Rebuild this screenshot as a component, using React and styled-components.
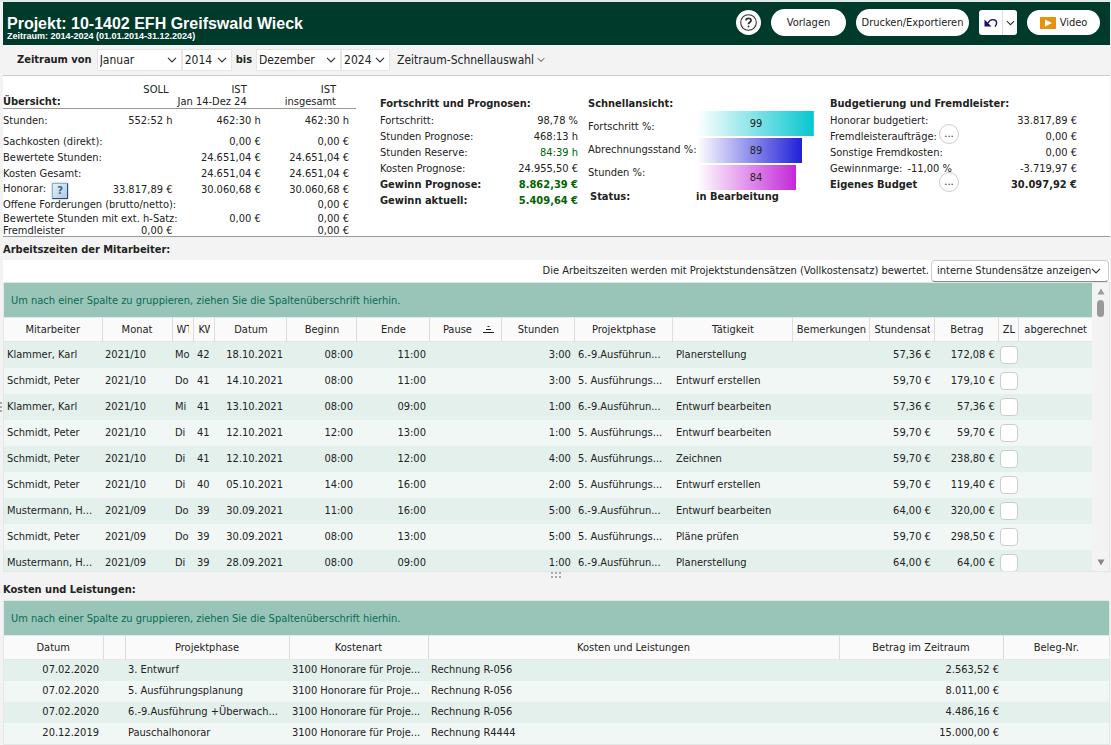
import React from 'react';
import styled, { createGlobalStyle } from 'styled-components';

function App() {
  return (
    <Page>
      <GlobalStyle />
      <Header />
      <PeriodBar />
      <Summary />
      <WorkTimes />
      <Splitter><Grip /></Splitter>
      <Costs />
    </Page>
  );
}

function Header() {
  return (
    <HeaderBar>
      <Titles>
        <Title>Projekt: 10-1402 EFH Greifswald Wieck</Title>
        <Subtitle>Zeitraum: 2014-2024 (01.01.2014-31.12.2024)</Subtitle>
      </Titles>
      <RoundButton aria-label="Hilfe">
        <svg width="19" height="19" viewBox="0 0 19 19" fill="none" stroke="#333">
          <circle cx="9.5" cy="9.5" r="7.8" strokeWidth="1.1" />
          <path d="M7 7.6 C7 4.6 12 4.6 12 7.4 C12 9.2 9.5 9.2 9.5 11.2" strokeWidth="1.8" />
          <circle cx="9.5" cy="13.5" r="0.6" fill="#333" strokeWidth="0.8" />
        </svg>
      </RoundButton>
      <PillButton $width={75}>Vorlagen</PillButton>
      <PillButton $width={113}>Drucken/Exportieren</PillButton>
      <SplitButton>
        <SplitPart $width={23} aria-label="Rückgängig">
          <svg width="14" height="10" viewBox="0 0 14 10" fill="none">
            <path d="M0.5 1.5 V8.5 H7.5 Z" fill="#14145c" />
            <path d="M4 5 C5.5 2 8.5 1.2 10.8 2 C13.2 3 13.2 6 11 8.6" stroke="#14145c" strokeWidth="1.4" />
          </svg>
        </SplitPart>
        <SplitPart $width={15} aria-label="Weitere Optionen"><Chevron size={9} /></SplitPart>
      </SplitButton>
      <PillButton $width={73} $low>
        <svg width="16" height="12" viewBox="0 0 16 12">
          <rect width="16" height="12" fill="#e8920f" />
          <path d="M5 2.5 L12 6 L5 9.5 Z" fill="#fff" />
        </svg>
        Video
      </PillButton>
    </HeaderBar>
  );
}

function Chevron({ size = 10 }) {
  return (
    <svg width={size} height="6" viewBox="0 0 10 6" fill="none" stroke="#333" strokeWidth="1.2">
      <path d="M1 0.8 L5 4.8 L9 0.8" />
    </svg>
  );
}

function SelectBox({ label, value, width, framed }) {
  return (
    <SelectFrame $width={width} $framed={framed}>
      <Select aria-label={label} defaultValue={value}>
        <option>{value}</option>
      </Select>
      <Chevron />
    </SelectFrame>
  );
}

function PeriodBar() {
  return (
    <Period>
      <PeriodLabel>Zeitraum von</PeriodLabel>
      <SelectBox label="Monat von" value="Januar" width={85} />
      <SelectBox label="Jahr von" value="2014" width={50} />
      <PeriodLabel>bis</PeriodLabel>
      <SelectBox label="Monat bis" value="Dezember" width={85} />
      <SelectBox label="Jahr bis" value="2024" width={49} />
      <QuickSelect>Zeitraum-Schnellauswahl <Chevron size={8} /></QuickSelect>
    </Period>
  );
}

const overview = [
  { label: 'Stunden:', values: ['552:52 h', '462:30 h', '462:30 h'], height: 25 },
  { label: 'Sachkosten (direkt):', values: ['', '0,00 €', '0,00 €'] },
  { label: 'Bewertete Stunden:', values: ['', '24.651,04 €', '24.651,04 €'] },
  { label: 'Kosten Gesamt:', values: ['', '24.651,04 €', '24.651,04 €'] },
  { label: 'Honorar:', help: true, values: ['33.817,89 €', '30.060,68 €', '30.060,68 €'] },
  { label: 'Offene Forderungen (brutto/netto):', values: ['', '', '0,00 €'], height: 15 },
  { label: 'Bewertete Stunden mit ext. h-Satz:', values: ['', '0,00 €', '0,00 €'], height: 13 },
  { label: 'Fremdleister', values: ['0,00 €', '', '0,00 €'], height: 11 },
];

const progress = [
  { label: 'Fortschritt:', value: '98,78 %' },
  { label: 'Stunden Prognose:', value: '468:13 h' },
  { label: 'Stunden Reserve:', value: '84:39 h', green: true },
  { label: 'Kosten Prognose:', value: '24.955,50 €' },
  { label: 'Gewinn Prognose:', value: '8.862,39 €', green: true, bold: true },
  { label: 'Gewinn aktuell:', value: '5.409,64 €', green: true, bold: true },
];

const bars = [
  { label: 'Fortschritt %:', value: 99, color: '#06c6d0' },
  { label: 'Abrechnungsstand %:', value: 89, color: '#2020d8' },
  { label: 'Stunden %:', value: 84, color: '#c428d8' },
];

const budget = [
  { label: 'Honorar budgetiert:', value: '33.817,89 €' },
  { label: 'Fremdleisteraufträge:', value: '0,00 €', more: true },
  { label: 'Sonstige Fremdkosten:', value: '0,00 €' },
  { label: 'Gewinnmarge:', extra: '-11,00 %', value: '-3.719,97 €' },
  { label: 'Eigenes Budget', value: '30.097,92 €', more: true, bold: true },
];

function Summary() {
  return (
    <SummaryGrid>
      <Overview>
        <OverviewTable>
          <colgroup>
            <col style={{ width: '23%' }} />
            <col style={{ width: '25%' }} />
            <col style={{ width: '25%' }} />
            <col />
          </colgroup>
          <thead>
            <tr><td /><th>SOLL</th><th>IST</th><th>IST</th></tr>
            <tr><th>Übersicht:</th><td /><th>Jan 14-Dez 24</th><th>insgesamt</th></tr>
          </thead>
          <tbody>
            {overview.map((row) => (
              <OverviewRow key={row.label} $height={row.height}>
                <th>
                  {row.label}
                  {row.help && <HelpButton aria-label="Hilfe zum Honorar">?</HelpButton>}
                </th>
                {row.values.map((value, i) => <td key={i}>{value}</td>)}
              </OverviewRow>
            ))}
          </tbody>
        </OverviewTable>
      </Overview>
      <Panel $right={10}>
        <PanelTitle>Fortschritt und Prognosen:</PanelTitle>
        {progress.map((row) => (
          <Line key={row.label} $bold={row.bold}>
            <span>{row.label}</span>
            <Value $green={row.green}>{row.value}</Value>
          </Line>
        ))}
      </Panel>
      <Panel $right={15}>
        <PanelTitle>Schnellansicht:</PanelTitle>
        <Chart>
          <BarLabels>
            {bars.map((bar) => <span key={bar.label}>{bar.label}</span>)}
          </BarLabels>
          <Bars>
            {bars.map((bar) => (
              <Bar key={bar.label} $color={bar.color} style={{ backgroundSize: `${bar.value}% 100%` }}>
                {bar.value}
              </Bar>
            ))}
          </Bars>
        </Chart>
        <Status>
          <span>Status:</span>
          <span>in Bearbeitung</span>
        </Status>
      </Panel>
      <Panel $right={33}>
        <PanelTitle>Budgetierung und Fremdleister:</PanelTitle>
        {budget.map((row) => (
          <BudgetLine key={row.label} $bold={row.bold}>
            <span>{row.label}{row.extra && <Extra>{row.extra}</Extra>}</span>
            {row.more ? <MoreButton aria-label={`${row.label} bearbeiten`}>...</MoreButton> : <span />}
            <Value>{row.value}</Value>
          </BudgetLine>
        ))}
      </Panel>
    </SummaryGrid>
  );
}

const timeColumns = [
  { title: 'Mitarbeiter', width: 98 },
  { title: 'Monat', width: 70 },
  { title: 'WT', width: 22, clipped: true },
  { title: 'KW', width: 21, clipped: true },
  { title: 'Datum', width: 72, right: true },
  { title: 'Beginn', width: 70, right: true },
  { title: 'Ende', width: 73, right: true },
  { title: 'Pause', width: 72, sorted: true },
  { title: 'Stunden', width: 73, right: true },
  { title: 'Projektphase', width: 98 },
  { title: 'Tätigkeit', width: 120 },
  { title: 'Bemerkungen', width: 77 },
  { title: 'Stundensatz', width: 65, right: true, clipped: true },
  { title: 'Betrag', width: 64, right: true },
  { title: 'ZL', width: 20 },
  { title: 'abgerechnet', width: 73 },
];

const phase6 = '6.-9.Ausführun...';
const phase5 = '5. Ausführungs...';

const times = [
  ['Klammer, Karl', '2021/10', 'Mo', '42', '18.10.2021', '08:00', '11:00', '3:00', phase6, 'Planerstellung', '57,36 €', '172,08 €'],
  ['Schmidt, Peter', '2021/10', 'Do', '41', '14.10.2021', '08:00', '11:00', '3:00', phase5, 'Entwurf erstellen', '59,70 €', '179,10 €'],
  ['Klammer, Karl', '2021/10', 'Mi', '41', '13.10.2021', '08:00', '09:00', '1:00', phase6, 'Entwurf bearbeiten', '57,36 €', '57,36 €'],
  ['Schmidt, Peter', '2021/10', 'Di', '41', '12.10.2021', '12:00', '13:00', '1:00', phase5, 'Entwurf bearbeiten', '59,70 €', '59,70 €'],
  ['Schmidt, Peter', '2021/10', 'Di', '41', '12.10.2021', '08:00', '12:00', '4:00', phase5, 'Zeichnen', '59,70 €', '238,80 €'],
  ['Schmidt, Peter', '2021/10', 'Di', '40', '05.10.2021', '14:00', '16:00', '2:00', phase5, 'Entwurf erstellen', '59,70 €', '119,40 €'],
  ['Mustermann, H...', '2021/09', 'Do', '39', '30.09.2021', '11:00', '16:00', '5:00', phase6, 'Entwurf bearbeiten', '64,00 €', '320,00 €'],
  ['Schmidt, Peter', '2021/09', 'Do', '39', '30.09.2021', '08:00', '13:00', '5:00', phase5, 'Pläne prüfen', '59,70 €', '298,50 €'],
  ['Mustermann, H...', '2021/09', 'Di', '39', '28.09.2021', '08:00', '09:00', '1:00', phase6, 'Planerstellung', '64,00 €', '64,00 €'],
];

function toCells(row) {
  const [name, month, day, week, date, start, end, hours, phase, task, rate, amount] = row;
  return [name, month, day, week, date, start, end, '', hours, phase, task, '', rate, amount, <Check key="zl" type="checkbox" aria-label={`ZL ${name} ${date}`} />, ''];
}

function DataTable({ columns, rows, rowHeight }) {
  const total = columns.reduce((sum, column) => sum + column.width, 0);
  return (
    <Table $rowHeight={rowHeight}>
      <colgroup>
        {columns.map((column, i) => (
          <col key={i} style={{ width: `${(column.width / total) * 100}%` }} />
        ))}
      </colgroup>
      <thead>
        <tr>
          {columns.map((column, i) => (
            <th key={i}>
              <HeadCell $clipped={column.clipped}>
                <HeadText>{column.title}</HeadText>
                {column.sorted && (
                  <svg width="17" height="8" viewBox="0 0 17 8" stroke="#222" fill="none">
                    <path d="M4.5 0.5 H6.5 M3 3.5 H8 M0 6.5 H11" />
                  </svg>
                )}
              </HeadCell>
            </th>
          ))}
        </tr>
      </thead>
      <tbody>
        {rows.map((row, r) => (
          <tr key={r}>
            {row.map((cell, i) => (
              <Cell key={i} $right={columns[i].right} $flush={typeof cell !== 'string'}>{cell}</Cell>
            ))}
          </tr>
        ))}
      </tbody>
    </Table>
  );
}

function WorkTimes() {
  return (
    <WorkSection>
      <SideHandle>
        <svg width="2" height="11" viewBox="0 0 2 11" fill="#a8a8a8">
          <path d="M0 0h2v2h-2z M0 4h2v2h-2z M0 8h2v2h-2z" />
        </svg>
      </SideHandle>
      <SectionTitle>Arbeitszeiten der Mitarbeiter:</SectionTitle>
      <RateBar>
        <span>Die Arbeitszeiten werden mit Projektstundensätzen (Vollkostensatz) bewertet.</span>
        <SelectBox label="Stundensätze" value="interne Stundensätze anzeigen" width={178} framed />
      </RateBar>
      <ScrollArea>
        <ScrollContent>
          <GroupBar>Um nach einer Spalte zu gruppieren, ziehen Sie die Spaltenüberschrift hierhin.</GroupBar>
          <DataTable columns={timeColumns} rows={times.map(toCells)} rowHeight={26} />
        </ScrollContent>
        <ScrollTrack>
          <svg width="8" height="7" viewBox="0 0 8 7"><path d="M4 0.5 L7.5 6.5 H0.5 Z" fill="#999" /></svg>
          <ScrollThumb />
          <svg width="8" height="7" viewBox="0 0 8 7"><path d="M4 6.5 L7.5 0.5 H0.5 Z" fill="#888" /></svg>
        </ScrollTrack>
      </ScrollArea>
    </WorkSection>
  );
}

const costColumns = [
  { title: 'Datum', width: 99, right: true },
  { title: '', width: 22 },
  { title: 'Projektphase', width: 164 },
  { title: 'Kostenart', width: 139 },
  { title: 'Kosten und Leistungen', width: 411 },
  { title: 'Betrag im Zeitraum', width: 164, right: true },
  { title: 'Beleg-Nr.', width: 106 },
];

const costType = '3100 Honorare für Proje...';

const costs = [
  ['07.02.2020', '', '3. Entwurf', costType, 'Rechnung R-056', '2.563,52 €', ''],
  ['07.02.2020', '', '5. Ausführungsplanung', costType, 'Rechnung R-056', '8.011,00 €', ''],
  ['07.02.2020', '', '6.-9.Ausführung +Überwach...', costType, 'Rechnung R-056', '4.486,16 €', ''],
  ['20.12.2019', '', 'Pauschalhonorar', costType, 'Rechnung R4444', '15.000,00 €', ''],
];

function Costs() {
  return (
    <section>
      <SectionTitle>Kosten und Leistungen:</SectionTitle>
      <CostArea>
        <GroupBar>Um nach einer Spalte zu gruppieren, ziehen Sie die Spaltenüberschrift hierhin.</GroupBar>
        <DataTable columns={costColumns} rows={costs} rowHeight={21} />
      </CostArea>
    </section>
  );
}

function Grip() {
  return (
    <svg width="11" height="6" viewBox="0 0 11 6" fill="#a8a8a8">
      <path d="M0 0h2v2h-2z M4 0h2v2h-2z M8 0h2v2h-2z M0 4h2v2h-2z M4 4h2v2h-2z M8 4h2v2h-2z" />
    </svg>
  );
}

const GlobalStyle = createGlobalStyle`
  * {
    box-sizing: border-box;
  }

  body {
    margin: 0;
    background: #f3f3f3;
    color: #222;
    font-family: 'DejaVu Sans Condensed', 'DejaVu Sans', sans-serif;
    font-size: 11px;
    line-height: 16px;
  }

  button,
  select {
    padding: 0;
    border: 0;
    background: none;
    color: inherit;
    font: inherit;
  }

  svg {
    display: block;
    flex: none;
  }
`;

const Page = styled.main`
  min-height: 100vh;
  padding: 0 1px 0 3px;
  border-top: 2px solid #dfe9e6;
  overflow: hidden;
`;

const HeaderBar = styled.header`
  display: flex;
  align-items: center;
  gap: 10px;
  height: 43px;
  padding: 0 10px 2px 4px;
  background: #003a2b;
`;

const Titles = styled.div`
  flex: 1;
  padding-top: 10px;
  color: #fff;
  font-family: 'Liberation Sans', Arial, sans-serif;
  font-weight: bold;
  white-space: nowrap;
`;

const Title = styled.h1`
  margin: 0;
  font-size: 16px;
  line-height: 17px;
`;

const Subtitle = styled.div`
  font-size: 9px;
  line-height: 9px;
`;

const PillButton = styled.button`
  display: flex;
  align-items: center;
  justify-content: center;
  gap: 4px;
  width: ${(props) => props.$width}px;
  height: ${(props) => (props.$low ? 25 : 27)}px;
  border-radius: 14px;
  background: #fff;
  white-space: nowrap;
`;

const RoundButton = styled.button`
  display: grid;
  place-items: center;
  width: 25px;
  height: 25px;
  border-radius: 50%;
  background: #fff;
`;

const SplitButton = styled.div`
  display: flex;
  height: 25px;
  border-radius: 3px;
  background: #fff;
`;

const SplitPart = styled.button`
  display: grid;
  place-items: center;
  width: ${(props) => props.$width}px;

  & + & {
    border-left: 1px solid #ddd;
  }
`;

const Period = styled.div`
  display: flex;
  align-items: center;
  height: 31px;
  padding-left: 14px;
  border-bottom: 1px solid #ccc;
  font-size: 12px;
`;

const PeriodLabel = styled.span`
  padding-right: 5px;
  font-size: 11px;
  font-weight: bold;

  div + & {
    padding-right: 4px;
    padding-left: 4px;
  }
`;

const SelectFrame = styled.div`
  display: flex;
  align-items: center;
  width: ${(props) => props.$width}px;
  height: 22px;
  padding: 0 ${(props) => (props.$framed ? 7 : 4)}px 0 ${(props) => (props.$framed ? 5 : 2)}px;
  border: 1px solid ${(props) => (props.$framed ? '#ccc' : '#e6e6e6')};
  border-bottom-color: ${(props) => (props.$framed ? '#888' : '#e6e6e6')};
  border-radius: ${(props) => (props.$framed ? 4 : 0)}px;
  background: #fff;
`;

const Select = styled.select`
  flex: 1;
  min-width: 0;
  height: 20px;
  appearance: none;
  text-overflow: clip;
`;

const QuickSelect = styled.button`
  display: flex;
  align-items: center;
  gap: 3px;
  margin-left: 7px;
`;

const SummaryGrid = styled.section`
  display: grid;
  grid-template-columns: minmax(0, 377fr) minmax(0, 208fr) minmax(0, 242fr) minmax(0, 280fr);
  border-bottom: 1px solid #999;
  background: #fff;
  white-space: nowrap;
`;

const Overview = styled.div`
  padding: 7px 24px 0 0;
`;

const OverviewTable = styled.table`
  width: 100%;
  border-collapse: collapse;
  table-layout: fixed;
  line-height: 11px;

  th,
  td {
    padding: 0;
    font-weight: normal;
    text-align: right;
  }

  th:first-child {
    text-align: left;
  }

  td:last-child {
    padding-right: 7px;
  }

  thead tr {
    height: 13px;
  }

  thead th {
    padding-right: 14px;
  }

  thead th:nth-child(2) {
    padding-right: 4px;
  }

  thead th:last-child {
    padding-right: 20px;
  }

  thead th:first-child {
    padding-right: 0;
    font-weight: bold;
  }

  thead tr:last-child {
    height: 12px;
    border-bottom: 1px solid #999;
  }
`;

const OverviewRow = styled.tr`
  height: ${(props) => props.$height || 16}px;
`;

const HelpButton = styled.button`
  width: 16px;
  height: 16px;
  margin: -6px 0 -4px 6px;
  border: 1px solid #8fb0cc;
  border-right-color: #2f4a68;
  border-bottom-color: #2f4a68;
  background: linear-gradient(135deg, #e6f2fa, #a9cbe6);
  box-shadow: 0 0 2px #9ab;
  color: #3c6288;
  font-weight: bold;
  line-height: 13px;
  vertical-align: -2px;
`;

const Panel = styled.div`
  padding: 20px ${(props) => props.$right}px 28px 0;
`;

const PanelTitle = styled.h2`
  margin: 0;
  font-size: 11px;
  line-height: 16px;
`;

const Line = styled.div`
  display: flex;
  justify-content: space-between;
  height: 16px;
  line-height: 17px;
  font-weight: ${(props) => (props.$bold ? 'bold' : 'normal')};
`;

const Value = styled.span`
  color: ${(props) => (props.$green ? '#006400' : 'inherit')};
  text-align: right;
`;

const BudgetLine = styled.div`
  display: grid;
  grid-template-columns: 109px 20px 1fr;
  height: 16px;
  line-height: 17px;
  font-weight: ${(props) => (props.$bold ? 'bold' : 'normal')};
`;

const Extra = styled.span`
  padding-left: 5px;
`;

const MoreButton = styled.button`
  width: 20px;
  height: 20px;
  margin-top: -4px;
  border: 1px solid #ccc;
  border-radius: 50%;
  background: #fff;
  font-weight: normal;
  line-height: 16px;
`;

const Chart = styled.div`
  display: grid;
  grid-template-columns: 109px 1fr;
  height: 77px;
`;

const BarLabels = styled.div`
  display: grid;
  grid-auto-rows: 23px;
  padding-top: 7px;
`;

const Bars = styled.div`
  display: grid;
  grid-auto-rows: 25px;
  gap: 2px;
  margin-top: -1px;
`;

const Bar = styled.div`
  background: linear-gradient(to right, #fff, ${(props) => props.$color}) no-repeat;
  line-height: 26px;
  text-align: center;
`;

const Status = styled.div`
  display: grid;
  grid-template-columns: 106px 1fr;
  padding-left: 2px;
  font-weight: bold;
`;

const WorkSection = styled.section`
  position: relative;
`;

const SideHandle = styled.div`
  position: absolute;
  top: 165px;
  left: -3px;
`;

const SectionTitle = styled.h2`
  margin: 0;
  padding-top: 3px;
  font-size: 11px;
  line-height: 20px;
`;

const RateBar = styled.div`
  display: flex;
  align-items: center;
  justify-content: flex-end;
  gap: 2px;
  height: 22px;
  padding-right: 1px;
  background: #fff;
`;

const ScrollArea = styled.div`
  display: flex;
  height: 290px;
  border: 1px solid #e2e8e6;
  overflow: hidden;
`;

const ScrollContent = styled.div`
  flex: 1;
  min-width: 0;
`;

const ScrollTrack = styled.div`
  display: flex;
  flex-direction: column;
  align-items: center;
  gap: 5px;
  width: 17px;
  padding: 5px 0;

  svg:last-child {
    margin-top: auto;
  }
`;

const ScrollThumb = styled.div`
  width: 7px;
  height: 17px;
  border-radius: 4px;
  background: #999;
`;

const GroupBar = styled.div`
  padding: 2px 7px 0;
  background: #99c5b9;
  color: #0a6b54;
  line-height: 32px;
  white-space: nowrap;
`;

const Table = styled.table`
  width: 100%;
  border-collapse: collapse;
  table-layout: fixed;

  th {
    height: 24px;
    padding: 0;
    border-right: 1px solid #ddd;
    background: #fafafa;
    font-weight: normal;
  }

  thead {
    border-top: 1px solid #dcebe6;
    border-bottom: 1px solid #e2e8e6;
  }

  th:last-child {
    border-right: 0;
  }

  tbody tr {
    height: ${(props) => props.$rowHeight}px;
    background: #f1f7f5;
  }

  tbody tr:nth-child(odd) {
    background: #e4f0ec;
  }
`;

const HeadCell = styled.div`
  display: flex;
  align-items: center;
  padding: 0 ${(props) => (props.$clipped ? 4 : 1)}px;
`;

const HeadText = styled.span`
  flex: 1;
  overflow: hidden;
  text-align: center;
  white-space: nowrap;
`;

const Cell = styled.td`
  padding: 0 ${(props) => (props.$right ? 4 : 1)}px 0 ${(props) => (props.$flush ? 1 : 3)}px;
  overflow: hidden;
  text-align: ${(props) => (props.$right ? 'right' : 'left')};
  white-space: nowrap;
`;

const Check = styled.input`
  display: block;
  width: 18px;
  height: 18px;
  margin: 0;
  appearance: none;
  border: 1px solid #ccc;
  border-radius: 4px;
  background: #fff;
`;

const Splitter = styled.div`
  display: flex;
  justify-content: center;
  height: 5px;
`;

const CostArea = styled.div`
  border: 1px solid #e2e8e6;
`;

export default App;
